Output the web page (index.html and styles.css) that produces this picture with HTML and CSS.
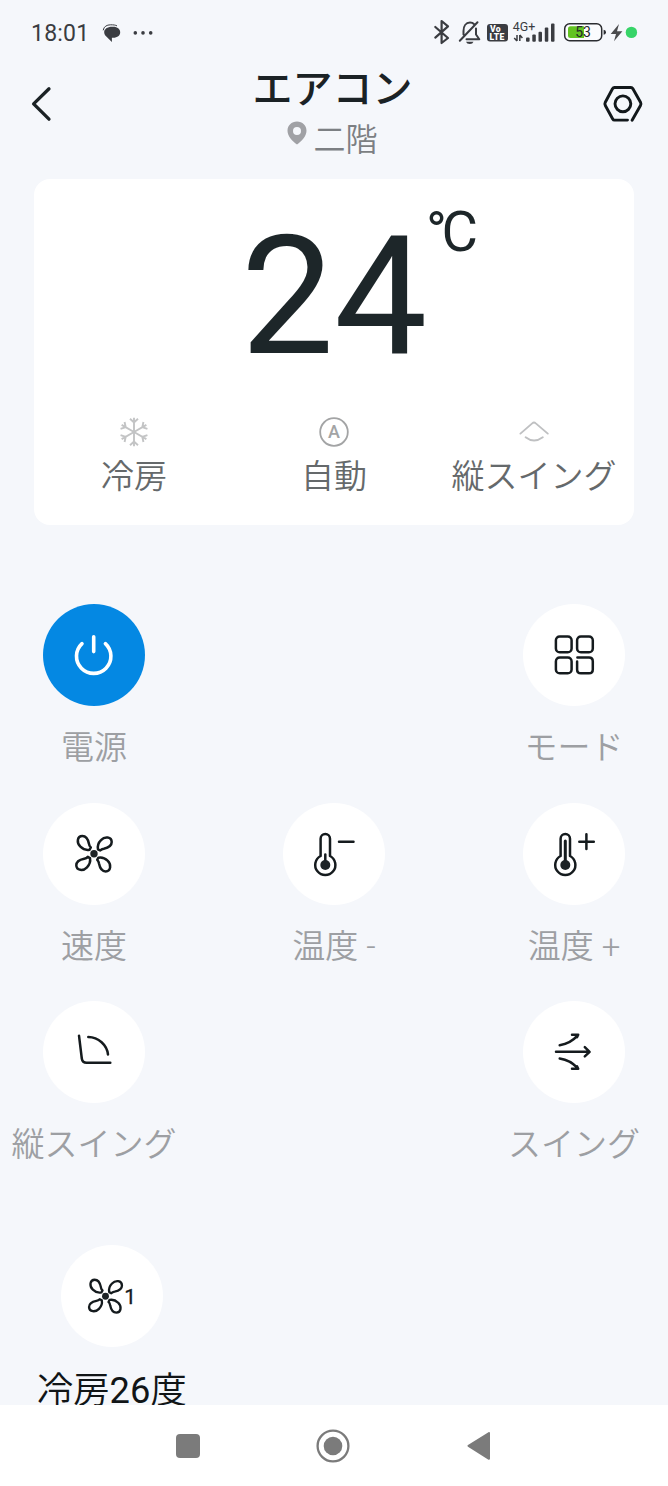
FILE: index.html
```html
<!DOCTYPE html>
<html lang="ja">
<head>
<meta charset="utf-8">
<title>エアコン</title>
<link rel="stylesheet" href="styles.css">
</head>
<body>
<svg class="defs" width="0" height="0">
  <defs>
    <path id="blade" d="M-4.4 -4C-7.6 -3.4 -11 -4.4 -13.6 -7C-17.6 -10.8 -17 -17.6 -11.6 -17.7C-7.2 -17.7 -5.6 -12.8 -5 -9.8C-4.7 -7.6 -4 -6.9 -3.2 -6.2Z"/>
    <g id="fan">
      <use href="#blade"/>
      <use href="#blade" transform="rotate(90)"/>
      <use href="#blade" transform="rotate(180)"/>
      <use href="#blade" transform="rotate(270)"/>
      <circle r="3.7" fill="#1d2326" stroke="none"/>
    </g>
    <g id="arm">
      <path d="M0 0V-14.3M-4 -13.2L0 -9.6L4 -13.2"/>
    </g>
  </defs>
</svg>
<div class="screen">
  <div class="status">
    <span class="clock">18:01</span>
    <svg class="chat" width="20" height="20" viewBox="102 22.5 20 20"><path d="M103.2 29.8C103.8 26 106.8 24.3 110.5 24.3C113.5 24.3 115.5 24.5 117 25.4" fill="none" stroke="#3a3c41" stroke-width="1"/><path d="M112.2 26.2H113.2C117.4 26.2 120.2 28.6 120.2 31.7C120.2 34.9 117.4 37.2 113.2 37.2H111.9V41.4L105.8 35.6C104.8 34.5 104.2 33.2 104.2 31.7C104.2 28.6 107.2 26.2 112.2 26.2Z" fill="#3a3c41"/></svg>
    <svg class="dots" width="20" height="6" viewBox="133 29.5 20 6" fill="#3a3c41"><circle cx="135.3" cy="32.4" r="1.8"/><circle cx="143" cy="32.4" r="1.8"/><circle cx="150.7" cy="32.4" r="1.8"/></svg>
    <svg class="indicators" width="206" height="30" viewBox="432 17 206 30">
      <path d="M435.3 27L448 38L441.6 43V21L448 26.4L435.3 37.6" fill="none" stroke="#3a3c41" stroke-width="2.2" stroke-linejoin="round" stroke-linecap="round"/>
      <g fill="none" stroke="#3a3c41" stroke-width="2" stroke-linecap="round" stroke-linejoin="round"><path d="M463.5 34.6V31C463.5 26.3 465.8 22.6 470 22.6C471.8 22.6 473.2 23.2 474.2 24.2M476 28.5V34.5L479.3 39.2H466.5M477.5 22.2L459.8 40.8"/></g>
      <path d="M466 41.7H473.5Q472.8 44 469.8 44T466 41.7Z" fill="#3a3c41"/>
      <rect x="487" y="24" width="21" height="17.5" rx="3" fill="#3a3c41"/>
      <text x="490" y="32" class="lte">Vo</text><text x="489.6" y="39.8" class="lte">LTE</text>
      <text x="512.8" y="31" class="net">4G+</text>
      <path d="M517 35V41M514.2 38L517 41M519.8 41V35M519.8 35L522.4 38" stroke="#3a3c41" stroke-width="1.5" fill="none"/>
      <g fill="#3a3c41"><rect x="526" y="37.5" width="3.6" height="4.3" rx="1"/><rect x="532.3" y="34.5" width="3.5" height="7.3" rx="1"/><rect x="538.5" y="31.7" width="3.5" height="10.1" rx="1"/><rect x="544.8" y="27.5" width="3.5" height="14.3" rx="1"/><rect x="551" y="23.5" width="3.5" height="18.3" rx="1"/></g>
      <rect x="564.7" y="23.7" width="37" height="17" rx="5" fill="#fbfcfe" stroke="#2b2d31" stroke-width="1.5"/>
      <path d="M584 26.3H570.5Q568 26.3 568 28.8V35.5Q568 38 570.5 38H584Z" fill="#62c321"/>
      <path d="M603.6 29.7Q606 30 606 32.3T603.6 34.8Z" fill="#2b2d31"/>
      <text x="575.2" y="37" class="charge">53</text>
      <path d="M619 24L610.7 34H616L614 41.3L622.4 31.3H617Z" fill="#4a4b4e"/>
      <circle cx="631.4" cy="32.4" r="5.7" fill="#37d468"/>
    </svg>
  </div>

  <header class="header">
    <svg class="back" width="22" height="38" viewBox="30 84.5 22 38"><path d="M49 88.3L33.6 103.4L49 118.7" fill="none" stroke="#1b2225" stroke-width="3.3" stroke-linecap="round" stroke-linejoin="round"/></svg>
    <div class="heading">
      <h1 class="title">エアコン</h1>
      <div class="place">
        <svg width="20" height="24" viewBox="288.5 120.5 20 24"><path fill-rule="evenodd" d="M298.5 121C304 121 308 125 308 130.2C308 136 303 140.5 298.5 144C294 140.5 289 136 289 130.2C289 125 293 121 298.5 121ZM298.5 126.6A4 4 0 1 0 298.5 134.6A4 4 0 1 0 298.5 126.6Z" fill="#a0a1a5"/></svg>
        <span>二階</span>
      </div>
    </div>
    <svg class="gear" width="42" height="38" viewBox="602.5 84.5 42 38" fill="none" stroke="#12181b" stroke-width="2.9" stroke-linecap="round" stroke-linejoin="round"><path d="M628 119.6H615Q613.8 119.6 613.2 118.5L605.8 105Q605 103.3 605.8 101.7L613 88.2Q613.7 87 615 87H631.4Q632.7 87 633.4 88.2L641 101.7Q641.8 103.3 641 105L632.6 119.8"/><circle cx="623.4" cy="103.3" r="7.9"/></svg>
  </header>

  <section class="card">
    <div class="temp"><span class="value">24</span><span class="unit"><span class="degree">°</span>C</span></div>
    <div class="states">
      <div class="state">
        <svg width="32" height="32" viewBox="-16 -16 32 32" fill="none" stroke="#c3c4c5" stroke-width="1.9"><use href="#arm"/><use href="#arm" transform="rotate(60)"/><use href="#arm" transform="rotate(120)"/><use href="#arm" transform="rotate(180)"/><use href="#arm" transform="rotate(240)"/><use href="#arm" transform="rotate(300)"/></svg>
        <span>冷房</span>
      </div>
      <div class="state">
        <svg width="32" height="32" viewBox="-16 -16 32 32"><circle r="13.8" fill="none" stroke="#a3a4a5" stroke-width="1.8"/><text x="0" y="6.2" class="auto">A</text></svg>
        <span>自動</span>
      </div>
      <div class="state">
        <svg width="32" height="32" viewBox="518 416 32 32" fill="none" stroke="#bfc0c2" stroke-width="1.9" stroke-linecap="round"><path d="M520.4 433.6L532.2 423.4Q534 421.8 535.8 423.4L547.8 433.6M525.6 437.3Q534 443.8 542.8 437.3"/></svg>
        <span>縦スイング</span>
      </div>
    </div>
  </section>

  <main class="keys">
    <div class="key">
      <button class="round on"><svg width="60" height="60" viewBox="64 625 60 60" fill="none" stroke="#fff" stroke-width="3.6" stroke-linecap="round"><path d="M82 643.6A17.2 17.2 0 1 0 105.4 643.6M93.7 636.8V651.6"/></svg></button>
      <span>電源</span>
    </div>
    <div></div>
    <div class="key">
      <button class="round"><svg width="60" height="60" viewBox="544 625 60 60" class="line"><rect x="555.9" y="636.5" width="15.7" height="15.7" rx="3.8"/><rect x="577.1" y="636.5" width="15.7" height="15.7" rx="3.8"/><rect x="555.9" y="657.6" width="15.7" height="15.7" rx="3.8"/><path d="M577.4 657.6H589Q592.8 657.6 592.8 661.4V669.5Q592.8 673.3 589 673.3H580.9Q577.1 673.3 577.1 669.5V661.5"/></svg></button>
      <span>モード</span>
    </div>

    <div class="key">
      <button class="round"><svg width="60" height="60" viewBox="-30 -29.7 60 60" class="line"><use href="#fan"/></svg></button>
      <span>速度</span>
    </div>
    <div class="key">
      <button class="round"><svg width="60" height="60" viewBox="304 824 60 60" class="line"><path d="M320.6 856V838.7A4.7 4.7 0 0 1 330 838.7V856A10.1 10.1 0 1 1 320.6 856ZM339 841.7H353.5"/><path d="M325.3 854.5V864"/><circle cx="325.3" cy="865" r="5" class="solid"/></svg></button>
      <span>温度 -</span>
    </div>
    <div class="key">
      <button class="round"><svg width="60" height="60" viewBox="544 824 60 60" class="line"><path d="M560.6 856V838.7A4.7 4.7 0 0 1 570 838.7V856A10.1 10.1 0 1 1 560.6 856ZM579.3 841.7H593.8M586.4 834.3V849"/><path d="M565.3 841V864" stroke-width="3"/><circle cx="565.3" cy="865" r="5" class="solid"/></svg></button>
      <span>温度 +</span>
    </div>

    <div class="key">
      <button class="round"><svg width="60" height="60" viewBox="64 1022.5 60 60" class="line"><path d="M79 1036.2L81.8 1059Q82.4 1063.3 86.6 1063.3H110.3M88.3 1037.4C98.5 1037.6 107 1045.5 108 1055"/></svg></button>
      <span>縦スイング</span>
    </div>
    <div></div>
    <div class="key">
      <button class="round"><svg width="60" height="60" viewBox="544 1022.5 60 60" class="line"><path d="M556 1052.3H589.3M584.8 1047.7L589.6 1052.3L584.8 1056.9"/><path d="M559.7 1045.7Q570.5 1044 577.2 1036.4M572 1035.3H578.2L577 1037.8M559.7 1058.9Q570.5 1060.6 577.2 1068.2M572 1069.3H578.2L577 1066.8"/></svg></button>
      <span>スイング</span>
    </div>
  </main>

  <section class="presets">
    <div class="preset">
      <button class="round"><svg width="60" height="60" viewBox="81.5 1265.5 60 60" class="line"><g transform="translate(105 1295.7) scale(.93)"><use href="#fan"/></g><text x="123.8" y="1303.8" class="speed">1</text></svg></button>
      <span>冷房<b>26</b>度</span>
    </div>
  </section>

  <nav class="nav">
    <svg width="24" height="24" viewBox="0 0 24 24"><rect width="24" height="24" rx="4" fill="#7b7b7b"/></svg>
    <svg width="34" height="34" viewBox="-17 -17 34 34"><circle r="15.4" fill="none" stroke="#7b7b7b" stroke-width="2.3"/><circle r="9.3" fill="#7b7b7b"/></svg>
    <svg width="24" height="28" viewBox="467 1432 24 28"><path d="M468.5 1445.8L489 1433V1458.8Z" fill="#7b7b7b" stroke="#7b7b7b" stroke-width="2" stroke-linejoin="round"/></svg>
  </nav>
</div>
</body>
</html>
```

FILE: styles.css
```css
* { box-sizing: border-box; }
body {
  margin: 0;
  background: #f5f7fb;
  font-family: Roboto, "Noto Sans CJK JP", sans-serif;
}
.defs { position: absolute; }
svg { display: block; flex: none; }
.screen {
  width: 668px;
  height: 1486px;
  display: flex;
  flex-direction: column;
  overflow: hidden;
}

.status {
  height: 66px;
  padding: 0 30px 0 31px;
  display: flex;
  align-items: center;
  color: #3a3c41;
}
.clock { width: 71px; margin-top: 2px; font-size: 23px; letter-spacing: 0.2px; line-height: 30px; }
.chat { margin-top: -1px; }
.dots { margin-left: 11px; margin-top: -1px; }
.indicators { margin-left: auto; margin-top: -2px; }
.lte { font: 900 8.6px Roboto, sans-serif; fill: #fff; letter-spacing: 0.3px; }
.net { font: 400 12.4px Roboto, sans-serif; fill: #3a3c41; }
.charge { font: 400 14px Roboto, sans-serif; fill: #26282b; }

.header {
  height: 113px;
  padding: 0 24px 0 30px;
  display: flex;
  align-items: flex-start;
  justify-content: space-between;
}
.back, .gear { margin-top: 18.5px; }
.heading { margin-left: 11px; display: flex; flex-direction: column; align-items: center; }
.title { margin: 0; font-size: 40px; font-weight: 500; line-height: 48px; color: #1b2225; }
.place {
  display: flex;
  gap: 6px;
  font-size: 32px;
  line-height: 52px;
  color: #7c7f83;
}
.place svg { margin-top: 6.5px; }
.place span { font-weight: 350; }

.card {
  flex: none;
  height: 346px;
  margin: 0 34px;
  border-radius: 16px;
  background: #fff;
}
.temp { position: relative; height: 236px; text-align: center; color: #1d2629; }
.value { font-size: 166px; line-height: 235px; }
.unit { position: absolute; left: 392px; top: 19.5px; font-size: 56px; line-height: 66px; }
.degree { letter-spacing: -5.5px; }
.states { display: grid; grid-template-columns: repeat(3, 200px); }
.state {
  display: flex;
  flex-direction: column;
  align-items: center;
  font-size: 33px;
  font-weight: 350;
  line-height: 48px;
  white-space: nowrap;
  color: #65696b;
}
.state svg { margin-top: 1px; margin-bottom: 5px; }
.auto { font: 500 18px Roboto, sans-serif; fill: #a3a4a5; text-anchor: middle; }

.keys {
  flex: none;
  margin-top: 79px;
  margin-left: -26px;
  display: grid;
  grid-template-columns: repeat(3, 240px);
  grid-auto-rows: 198.7px;
}
.key, .preset { display: flex; flex-direction: column; align-items: center; white-space: nowrap; }
.key span { margin-top: 18px; font-size: 33px; font-weight: 350; line-height: 48px; color: #9d9fa3; }
.round {
  flex: none;
  width: 102px;
  height: 102px;
  padding: 0;
  border: 0;
  border-radius: 50%;
  background: #fff;
  display: flex;
  align-items: center;
  justify-content: center;
}
.on { background: #0488e3; }
.line { fill: none; stroke: #151b1e; stroke-width: 2.5; stroke-linecap: round; stroke-linejoin: round; }
.solid { fill: #1d2326; stroke: none; }
.speed { font: 400 21px Roboto, sans-serif; fill: #151b1e; stroke: #151b1e; stroke-width: 0.3; }

.presets { flex: 1; min-height: 0; padding: 44.5px 0 0 37px; overflow: hidden; display: flex; align-items: flex-start; }
.preset span { margin-top: 17px; font-size: 36.3px; font-weight: 350; line-height: 54px; color: #111517; }
.preset b { font-weight: 400; }

.nav {
  flex: none;
  height: 81px;
  padding: 0 177px 0 175.5px;
  display: flex;
  align-items: center;
  justify-content: space-between;
  background: #fff;
}
```
